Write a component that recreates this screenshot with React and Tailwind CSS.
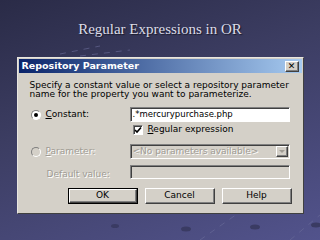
import React from 'react';

const raised =
  'border border-t-white border-l-white border-r-[#404040] border-b-[#404040] shadow-[inset_-1px_-1px_0_#808080]';
const sunken =
  'border border-t-[#808080] border-l-[#808080] border-r-white border-b-white shadow-[inset_1px_1px_0_#404040]';

const Radio = ({ checked, disabled }) => (
  <span
    className={`w-[10px] h-[10px] rounded-full border border-t-[#808080] border-l-[#808080] border-r-white border-b-white flex items-center justify-center shrink-0 ${
      disabled ? 'bg-[#d4d0c8]' : 'bg-white'
    }`}
  >
    {checked && <span className="w-[4px] h-[4px] rounded-full bg-black" />}
  </span>
);

const App = () => {
  return (
    <div className="w-[320px] h-[240px] overflow-hidden relative bg-[linear-gradient(160deg,#2a2b47_0%,#3c3d62_40%,#52538c_100%)] flex flex-col items-center font-['DejaVu_Sans',sans-serif]">
      {/* background streaks */}
      <svg className="absolute inset-0" width="320" height="240">
        <g stroke="#6b6d9a" strokeWidth="1" strokeDasharray="6 6" opacity="0.6">
          <line x1="60" y1="54" x2="100" y2="46" />
          <line x1="80" y1="56" x2="130" y2="50" />
          <line x1="200" y1="240" x2="250" y2="205" />
          <line x1="290" y1="240" x2="320" y2="215" />
        </g>
        <g fill="#3a3b63">
          <ellipse cx="186" cy="229" rx="5" ry="2.5" />
          <ellipse cx="255" cy="227" rx="5" ry="2.5" />
          <ellipse cx="316" cy="225" rx="5" ry="2.5" />
          <ellipse cx="115" cy="226" rx="4" ry="2" />
        </g>
      </svg>

      <h1 className="relative mt-[19px] text-[15px] leading-[20px] text-[#dcdce8] font-['Liberation_Serif',serif] [text-shadow:1px_1px_1px_#1a1a2a]">
        Regular Expressions in OR
      </h1>

      <div className="relative mt-[18px] w-[287px] h-[157px] bg-[#d4d0c8] border border-t-[#e8e6e0] border-l-[#e8e6e0] border-r-[#404040] border-b-[#404040] flex flex-col">
        {/* title bar */}
        <div className="mx-[1px] mt-[1px] h-[14px] bg-[linear-gradient(90deg,#0a246a,#a6caf0)] flex items-center justify-between pl-[3px] pr-[3px]">
          <span className="text-white text-[9.5px] font-bold leading-none">Repository Parameter</span>
          <span className={`w-[14px] h-[11px] bg-[#d4d0c8] ${raised} flex items-center justify-center text-[9px] font-bold leading-none text-black`}>
            ✕
          </span>
        </div>

        <div className="pl-[12px] pr-[6px] pt-[8px] text-[9px] leading-[9px] text-black whitespace-nowrap">
          <p>Specify a constant value or select a repository parameter</p>
          <p>name for the property you want to parameterize.</p>
        </div>

        {/* constant row */}
        <div className="mt-[8px] flex items-center h-[15px]">
          <div className="w-[112px] pl-[13px] flex items-center gap-[5px]">
            <Radio checked />
            <span className="text-[9px] text-black"><span className="underline">C</span>onstant:</span>
          </div>
          <div className={`w-[160px] h-[15px] bg-white ${sunken} flex items-center pl-[2px] text-[8.5px] text-black`}>
            .*mercurypurchase.php
          </div>
        </div>

        {/* checkbox row */}
        <div className="mt-[3px] flex items-center h-[10px] pl-[115px] gap-[5px]">
          <span className={`w-[10px] h-[10px] bg-white ${sunken} flex items-center justify-center`}>
            <svg width="8" height="8" viewBox="0 0 8 8">
              <path d="M1 4 L3 6 L7 1.5" stroke="black" strokeWidth="1.6" fill="none" />
            </svg>
          </span>
          <span className="text-[9px] text-black"><span className="underline">R</span>egular expression</span>
        </div>

        {/* parameter row */}
        <div className="mt-[9px] flex items-center h-[15px]">
          <div className="w-[112px] pl-[13px] flex items-center gap-[5px]">
            <Radio disabled />
            <span className="text-[9px] text-[#a09c94] [text-shadow:1px_1px_0_#fff]"><span className="underline">P</span>arameter:</span>
          </div>
          <div className={`w-[160px] h-[15px] bg-[#d4d0c8] ${sunken} flex items-center justify-between pl-[2px] text-[9px] text-[#a09c94]`}>
            <span className="[text-shadow:1px_1px_0_#fff]">&lt;No parameters available&gt;</span>
            <span className={`w-[12px] h-[11px] mr-[1px] ${raised} flex items-center justify-center`}>
              <svg width="6" height="4" viewBox="0 0 6 4"><path d="M0 0 H6 L3 3 Z" fill="#a09c94" /></svg>
            </span>
          </div>
        </div>

        {/* default value row */}
        <div className="mt-[6px] flex items-center h-[14px]">
          <div className="w-[112px] pl-[29px]">
            <span className="text-[9px] text-[#a09c94] [text-shadow:1px_1px_0_#fff]">Default value:</span>
          </div>
          <div className={`w-[160px] h-[14px] bg-[#d4d0c8] ${sunken}`} />
        </div>

        {/* buttons */}
        <div className="mt-[9px] flex pl-[50px] gap-[7px]">
          <div className="w-[70px] h-[16px] border border-black">
            <div className={`w-full h-full ${raised} flex items-center justify-center text-[9px] text-black`}>OK</div>
          </div>
          <div className={`w-[70px] h-[16px] ${raised} flex items-center justify-center text-[9px] text-black`}>Cancel</div>
          <div className={`w-[70px] h-[16px] ${raised} flex items-center justify-center text-[9px] text-black`}>Help</div>
        </div>
      </div>
    </div>
  );
};

export default App;
